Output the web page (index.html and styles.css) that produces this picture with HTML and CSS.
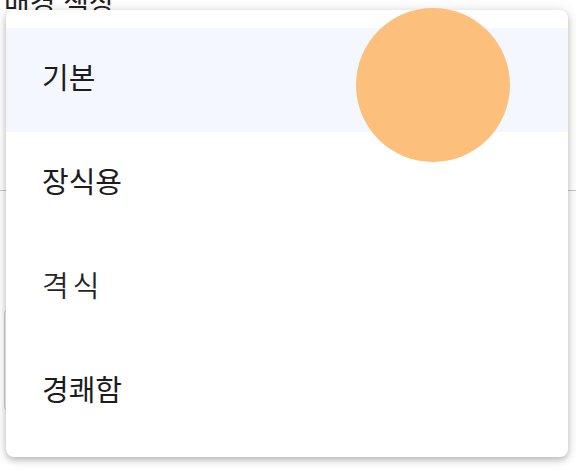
FILE: index.html
```html
<!DOCTYPE html>
<html lang="ko">
<head>
<meta charset="utf-8">
<link rel="stylesheet" href="styles.css">
</head>
<body>
<div class="page">
  <div class="backdrop">
    <div class="bg-title">배경 색상</div>
    <div class="divider"></div>
    <div class="field"></div>
  </div>
  <div class="menu">
    <div class="item selected"><span class="label">기본</span></div>
    <div class="item"><span class="label">장식용</span></div>
    <div class="item"><span class="label light">격식</span></div>
    <div class="item"><span class="label">경쾌함</span></div>
  </div>
  <div class="touch"></div>
</div>
</body>
</html>
```
FILE: styles.css
```css
html, body {
  margin: 0;
  padding: 0;
  background: #ffffff;
}
.page {
  position: relative;
  width: 576px;
  height: 472px;
  overflow: hidden;
  background: #ffffff;
  font-family: "Noto Sans CJK KR", "Noto Sans", sans-serif;
  color: #1f1f1f;
}
.backdrop {
  display: flex;
  flex-direction: column;
}
.bg-title {
  font-size: 28px;
  line-height: 28px;
  margin-top: -13px;
  padding-left: 4px;
  color: #202020;
}
.divider {
  margin-top: 175px;
  height: 1px;
  background: #c6c6cc;
}
.field {
  margin-top: 117px;
  margin-left: 4px;
  width: 300px;
  height: 102px;
  border: 1px solid #cfcfd4;
  border-radius: 6px;
}
.menu {
  position: absolute;
  left: 6px;
  top: 10px;
  width: 562px;
  padding: 18px 0 13px;
  box-sizing: border-box;
  background: #ffffff;
  border-radius: 8px;
  box-shadow: 0 3px 6px rgba(0, 0, 0, 0.22), 0 1px 14px rgba(0, 0, 0, 0.12);
  display: flex;
  flex-direction: column;
}
.item {
  height: 104px;
  box-sizing: border-box;
  display: flex;
  align-items: center;
  padding-left: 36px;
  padding-bottom: 8px;
}
.item.selected {
  background: #f4f7fe;
}
.label {
  font-size: 29px;
  line-height: 1;
  font-weight: 400;
  color: #1c1c1c;
}
.label.light {
  font-weight: 350;
  letter-spacing: 4px;
  color: #262626;
}
.touch {
  position: absolute;
  left: 356px;
  top: 8px;
  width: 154px;
  height: 154px;
  border-radius: 50%;
  background: #fcc07c;
}
```
